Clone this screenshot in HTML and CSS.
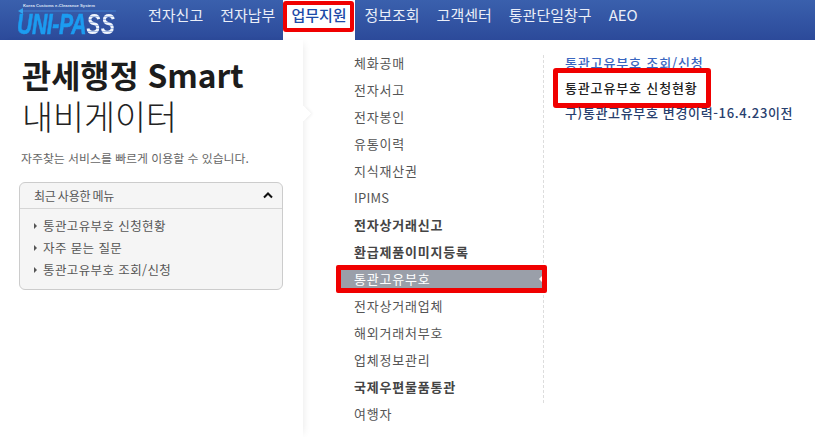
FILE: index.html
```html
<!DOCTYPE html>
<html lang="ko">
<head>
<meta charset="utf-8">
<title>UNI-PASS</title>
<link rel="stylesheet" href="styles.css">
</head>
<body>
<header class="topbar">
  <a class="logo">
    <span class="logo-tag">Korea Customs e-Clearance System</span>
    <svg class="logo-line" width="98" height="6" viewBox="0 0 98 6"><path d="M4 3H98" stroke="#3f7fd0" stroke-width="1"/><path d="M0 3l5-3v6z" fill="#35a4ee"/></svg>
    <span class="logo-name"><span class="uni">UNI-PA</span><span class="ss">SS</span></span>
  </a>
  <nav class="gnb">
    <a class="gnb-item">전자신고</a>
    <a class="gnb-item">전자납부</a>
    <a class="gnb-item active">업무지원</a>
    <a class="gnb-item">정보조회</a>
    <a class="gnb-item">고객센터</a>
    <a class="gnb-item">통관단일창구</a>
    <a class="gnb-item">AEO</a>
  </nav>
</header>
<main class="content">
  <aside class="side">
    <h1 class="title"><strong>관세행정 Smart</strong><br>내비게이터</h1>
    <p class="desc">자주찾는 서비스를 빠르게 이용할 수 있습니다.</p>
    <section class="recent">
      <div class="recent-head">
        <span>최근 사용한 메뉴</span>
        <svg width="10" height="7" viewBox="0 0 10 7"><path d="M1 5.5l4-4 4 4" fill="none" stroke="#111" stroke-width="2"/></svg>
      </div>
      <ul class="recent-list">
        <li>통관고유부호 신청현황</li>
        <li>자주 묻는 질문</li>
        <li>통관고유부호 조회/신청</li>
      </ul>
    </section>
  </aside>
  <ul class="menu">
    <li>체화공매</li>
    <li>전자서고</li>
    <li>전자봉인</li>
    <li>유통이력</li>
    <li>지식재산권</li>
    <li class="latin">IPIMS</li>
    <li class="bold">전자상거래신고</li>
    <li class="bold">환급제품이미지등록</li>
    <li class="selected">통관고유부호</li>
    <li>전자상거래업체</li>
    <li>해외거래처부호</li>
    <li>업체정보관리</li>
    <li class="bold">국제우편물품통관</li>
    <li>여행자</li>
  </ul>
  <ul class="submenu">
    <li class="link">통관고유부호 조회/신청</li>
    <li class="boxed">통관고유부호 신청현황</li>
    <li class="old">구)통관고유부호 변경이력-16.4.23이전</li>
  </ul>
</main>
</body>
</html>
```
FILE: styles.css
```css
*, *::before, *::after { box-sizing: border-box; }
html, body { margin: 0; padding: 0; }
body {
  width: 815px;
  height: 437px;
  overflow: hidden;
  background: #fff;
  font-family: "Noto Sans CJK KR", "Noto Sans", sans-serif;
  color: #444;
}
ul { list-style: none; margin: 0; padding: 0; }

.topbar {
  height: 40px;
  display: flex;
  background: linear-gradient(#3a60ad, #2c4a9a);
}
.logo {
  position: relative;
  width: 148px;
  height: 40px;
  display: block;
}
.logo-tag {
  position: absolute;
  left: 23px;
  top: 3px;
  font: bold 4.2px "Liberation Sans", sans-serif;
  color: #dbe2f4;
  white-space: nowrap;
}
.logo-line { position: absolute; left: 18px; top: 8px; }
.logo-name {
  position: absolute;
  left: 17px;
  top: 11px;
  font: italic bold 29px/26px "Liberation Sans", sans-serif;
  letter-spacing: -.5px;
  transform: scaleX(.73);
  transform-origin: left;
  white-space: nowrap;
}
.uni { color: #1c9cf0; -webkit-text-stroke: .6px #1c9cf0; }
.ss {
  padding-right: 4px;
  letter-spacing: .6px;
  color: transparent;
  background: repeating-linear-gradient(#f0f5fc 0 2px, #a9bfe6 2px 3px);
  -webkit-background-clip: text;
  background-clip: text;
}

.gnb { display: flex; }
.gnb-item {
  height: 40px;
  line-height: 30px;
  font-size: 15px;
  color: #eaeef8;
  margin-right: 17px;
  white-space: nowrap;
}
.gnb-item.active {
  position: relative;
  width: 72px;
  margin: 0 9px 0 -9px;
  padding-left: 8px;
  background: #fff;
  color: #1c4aa8;
  font-weight: 500;
}
.gnb-item.active::after {
  content: "";
  position: absolute;
  left: 0;
  top: 1px;
  width: 71px;
  height: 31px;
  border: 4px solid #f00000;
  border-radius: 3px;
}

.content { display: flex; height: 397px; }

.side {
  position: relative;
  width: 303px;
  padding: 13px 20px 0 22px;
  box-shadow: 4px 0 8px -4px rgba(0,0,0,.1);
}
.side::after {
  content: "";
  position: absolute;
  left: 298px;
  top: 68px;
  width: 11px;
  height: 11px;
  background: #fff;
  transform: rotate(45deg);
  box-shadow: 2px -2px 3px -1px rgba(0,0,0,.06);
}
.title {
  margin: 0;
  font-size: 33.7px;
  line-height: 42px;
  font-weight: 300;
  color: #222;
  white-space: nowrap;
}
.title strong { font-size: 31.7px; font-weight: 700; color: #1c1c1c; }
.desc {
  margin: 12px 0 0 -1px;
  font-size: 11.9px;
  line-height: 17px;
  color: #666;
  white-space: nowrap;
}
.recent {
  width: 264px;
  height: 108px;
  margin: 16px 0 0 -3px;
  background: #f5f5f5;
  border: 1px solid #ccc;
  border-radius: 6px;
}
.recent-head {
  height: 26px;
  padding: 0 9px 0 14px;
  display: flex;
  align-items: center;
  justify-content: space-between;
  font-size: 12px;
  word-spacing: -1px;
  letter-spacing: -.2px;
  color: #555;
  border-bottom: 1px solid #d5d5d5;
}
.recent-list { padding-top: 6px; }
.recent-list li {
  position: relative;
  height: 22px;
  line-height: 22px;
  padding-left: 23px;
  font-size: 12.5px;
  letter-spacing: .4px;
  color: #555;
  white-space: nowrap;
}
.recent-list li::before {
  content: "";
  position: absolute;
  left: 14px;
  top: 8px;
  border-left: 3px solid #555;
  border-top: 3px solid transparent;
  border-bottom: 3px solid transparent;
}

.menu {
  width: 241px;
  height: 348px;
  margin-top: 15px;
  padding-left: 33px;
  border-right: 1px dashed #ddd;
}
.menu li {
  height: 27px;
  line-height: 27px;
  margin: 0 0 0 18px;
  font-size: 13px;
  letter-spacing: .8px;
  color: #555;
  white-space: nowrap;
  position: relative;
  top: -6px;
}
.menu li.latin { letter-spacing: .2px; }
.menu li.bold { font-weight: 700; color: #444; }
.menu li.selected {
  margin: 0 0 -1px;
  width: 211px;
  height: 28px;
  padding-left: 13px;
  line-height: 17px;
  color: #fff;
  background: #9a9fa9;
  border: 5px solid #f00000;
  border-radius: 2px;
}
.menu li.selected::after {
  content: "";
  position: absolute;
  right: 0;
  top: 6px;
  border-right: 3px solid #fff;
  border-top: 3px solid transparent;
  border-bottom: 3px solid transparent;
}

.submenu { margin: 11px 0 0 21px; }
.submenu li {
  height: 24.5px;
  line-height: 24.5px;
  font-size: 13px;
  letter-spacing: .85px;
  font-weight: 500;
  color: #28406e;
  white-space: nowrap;
}
.submenu li.link { color: #3a66c0; }
.submenu li.boxed {
  position: relative;
  color: #222;
}
.submenu li.boxed::after {
  content: "";
  position: absolute;
  left: -12px;
  top: -7.5px;
  width: 158px;
  height: 40px;
  border: 5px solid #f00000;
  border-radius: 3px;
}
.submenu li.old { position: relative; top: .5px; letter-spacing: .65px; }
```
